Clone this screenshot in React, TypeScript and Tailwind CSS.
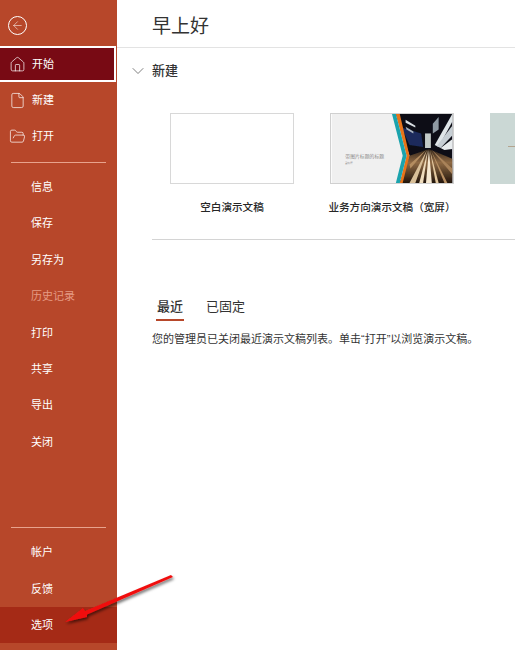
import { ArrowLeft, ChevronDown, File, FolderOpen, Home } from "lucide-react";

const font = { fontFamily: '"Noto Sans CJK SC", "Noto Sans", sans-serif' };

function NavItem({ label, muted }: { label: string; muted?: boolean }) {
  return (
    <div className={`flex h-[36.4px] items-center pb-[2px] pl-[31px] text-[11px] ${muted ? "text-[#e59a83]" : "text-white"}`}>
      {label}
    </div>
  );
}

function BusinessThumb() {
  return (
    <svg viewBox="0 0 124 71" className="block h-full w-full">
      <defs>
        <linearGradient id="road" x1="0" y1="0" x2="0" y2="1">
          <stop offset="0" stopColor="#2c2016" />
          <stop offset="0.4" stopColor="#8f6a44" />
          <stop offset="1" stopColor="#21150c" />
        </linearGradient>
        <filter id="soft">
          <feGaussianBlur stdDeviation="0.7" />
        </filter>
      </defs>
      <rect width="124" height="71" fill="#f0f0f0" />
      <g filter="url(#soft)">
        <polygon points="66,0 124,0 124,71 70,71 80,43" fill="#0d0f18" />
        <polygon points="72,14 92,20 94,34 80,32" fill="#1b2a5c" />
        <polygon points="76,6 86,12 86,14 76,9" fill="#d9dee2" />
        <polygon points="76,13 84,18 84,20 77,16" fill="#aab4c0" />
        <polygon points="70,71 80,43 100,36 124,46 124,71" fill="url(#road)" />
        <polygon points="98,37 80,71 86,71" fill="#d8bf98" />
        <polygon points="99,37 90,71 94,71" fill="#efdcbc" />
        <polygon points="100,37 97,71 103,71" fill="#f6e9d2" />
        <polygon points="101,37 107,71 110,71" fill="#e4c9a0" />
        <polygon points="102,37 116,71 119,71" fill="#b78f62" />
        <polygon points="103,37 124,56 124,62" fill="#a9835a" />
        <polygon points="97,37 80,52 81,56" fill="#b48d60" />
        <polygon points="106,32 124,0 124,8 110,34" fill="#dfe5e8" />
        <polygon points="108,33 124,12 124,22 112,35" fill="#c6ced4" />
        <polygon points="112,35 124,26 124,36 116,37" fill="#e8ecee" />
        <polygon points="104,10 110,3 110,16 104,20" fill="#8f9aa3" />
        <rect x="96" y="20" width="6" height="15" fill="#c3cbc8" />
      </g>
      <polygon points="66,0 70,0 80,43 73,71 70,71 77,43" fill="#e8741a" />
      <polygon points="62,0 66,0 77,43 70,71 66,71 73,43" fill="#1ba3ad" />
      <text x="14" y="45" fontSize="5" fill="#8a8a8a" style={font}>带图片标题的标题</text>
      <text x="14" y="51" fontSize="2.5" fill="#8a8a8a" style={font}>副标题</text>
    </svg>
  );
}

export default function App() {
  return (
    <div className="relative flex h-[650px] w-[515px] overflow-hidden bg-white" style={font}>
      <aside className="flex h-full w-[117px] shrink-0 flex-col bg-[#b7472a] text-white">
        <div className="flex h-[46px] shrink-0 items-center pl-[8px] pt-[5px]">
          <div className="flex h-[19px] w-[19px] items-center justify-center rounded-full border border-white">
            <ArrowLeft size={13} strokeWidth={1} />
          </div>
        </div>
        <div className="mr-px flex h-[36px] shrink-0 items-center gap-[6px] border-2 border-l-0 border-white bg-[#780a14] pl-[9px] text-[11px]">
          <Home size={17} strokeWidth={1} />
          <span className="pb-[2px]">开始</span>
        </div>
        <div className="flex h-[36px] shrink-0 items-center gap-[6px] pl-[9px] text-[11px]">
          <File size={17} strokeWidth={1} />
          <span className="pb-[2px]">新建</span>
        </div>
        <div className="flex h-[36px] shrink-0 items-center gap-[6px] pl-[9px] text-[11px]">
          <FolderOpen size={17} strokeWidth={1} />
          <span className="pb-[2px]">打开</span>
        </div>
        <div className="mx-[11px] mt-[8px] mb-[6px] h-px bg-[#e8a38d]" />
        <NavItem label="信息" />
        <NavItem label="保存" />
        <NavItem label="另存为" />
        <NavItem label="历史记录" muted />
        <NavItem label="打印" />
        <NavItem label="共享" />
        <NavItem label="导出" />
        <NavItem label="关闭" />
        <div className="mt-auto mx-[11px] mb-[6px] h-px bg-[#e8a38d]" />
        <NavItem label="帐户" />
        <NavItem label="反馈" />
        <div className="mb-[7px] flex h-[36px] items-center bg-[#a52a16] pb-[2px] pl-[31px] text-[11px]">选项</div>
      </aside>

      <main className="min-w-0 flex-1">
        <header className="flex h-[48px] items-center border-b border-[#e3e3e3] pt-[3px] pl-[35px] text-[19px] text-[#333333]">
          早上好
        </header>
        <div className="flex h-[45px] items-center gap-[4px] pl-[11px] text-[13px] font-medium text-[#333333]">
          <ChevronDown size={20} strokeWidth={1} className="text-[#666666]" />
          <span className="pb-[2px]">新建</span>
        </div>
        <div className="flex gap-[36px] pl-[53px] pt-[20px]">
          <div className="w-[124px] shrink-0">
            <div className="h-[71px] border border-[#d8d8d8] bg-white" />
            <div className="mt-[15px] whitespace-nowrap text-center text-[10.6px] font-medium text-[#262626]">空白演示文稿</div>
          </div>
          <div className="w-[124px] shrink-0">
            <div className="h-[71px] border border-[#d0d0d0]">
              <BusinessThumb />
            </div>
            <div className="mt-[15px] -mx-[6px] whitespace-nowrap text-center text-[10.6px] font-medium text-[#262626]">业务方向演示文稿（宽屏）</div>
          </div>
          <div className="h-[71px] w-[124px] shrink-0 bg-[#cbd8d5] pl-[18px] pt-[33px]">
            <div className="h-px w-[7px] bg-[#b3a48f]" />
          </div>
        </div>
        <div className="ml-[35px] mt-[24px] h-px bg-[#d4d4d4]" />
        <div className="flex gap-[22px] pl-[39px] pt-[56px] text-[13px] text-[#333333]">
          <div className="flex flex-col items-center">
            <span className="font-medium">最近</span>
            <span className="mt-[4px] h-[2px] w-[28px] bg-[#b7472a]" />
          </div>
          <span>已固定</span>
        </div>
        <p className="pl-[35px] pt-[9px] text-[11px] whitespace-nowrap text-[#333333]">
          您的管理员已关闭最近演示文稿列表。单击
          <span className="font-['Liberation_Sans']">“</span>打开<span className="font-['Liberation_Sans']">”</span>
          以浏览演示文稿。
        </p>
      </main>

      {/* annotation arrow on top of the screenshot */}
      <svg className="pointer-events-none absolute top-[570px] left-[60px]" width="120" height="60" viewBox="0 0 120 60">
        <defs>
          <filter id="arrowShadow" x="-20%" y="-40%" width="140%" height="200%">
            <feDropShadow dx="1" dy="2" stdDeviation="1.5" floodColor="#000" floodOpacity="0.6" />
          </filter>
        </defs>
        <g filter="url(#arrowShadow)">
          <polygon points="111,5 113,7 27,44.5 27,47 5,52 23,38 25,41" fill="#f01010" />
        </g>
      </svg>
    </div>
  );
}
